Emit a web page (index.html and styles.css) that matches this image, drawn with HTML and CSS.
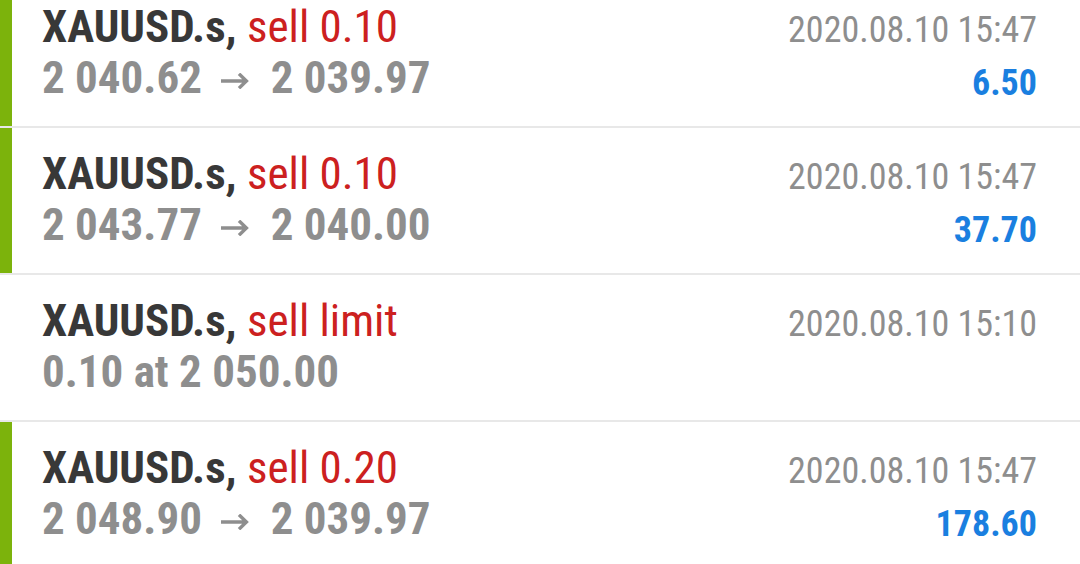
FILE: index.html
```html
<!DOCTYPE html>
<html>
<head>
<meta charset="utf-8">
<link rel="stylesheet" href="styles.css">
</head>
<body>
<div class="list">
  <div class="row open">
    <div class="bar"></div>
    <div class="main">
      <div class="title"><span class="sym">XAUUSD.s,</span> <span class="type">sell 0.10</span></div>
      <div class="prices">2 040.62 <svg class="arrow" viewBox="0 0 28 16" aria-label="→"><path d="M0 8H25.5M18 0.8L25.4 8L18 15.2"/></svg> 2 039.97</div>
    </div>
    <div class="side">
      <div class="time">2020.08.10 15:47</div>
      <div class="profit">6.50</div>
    </div>
  </div>
  <div class="row open">
    <div class="bar"></div>
    <div class="main">
      <div class="title"><span class="sym">XAUUSD.s,</span> <span class="type">sell 0.10</span></div>
      <div class="prices">2 043.77 <svg class="arrow" viewBox="0 0 28 16" aria-label="→"><path d="M0 8H25.5M18 0.8L25.4 8L18 15.2"/></svg> 2 040.00</div>
    </div>
    <div class="side">
      <div class="time">2020.08.10 15:47</div>
      <div class="profit">37.70</div>
    </div>
  </div>
  <div class="row">
    <div class="bar"></div>
    <div class="main">
      <div class="title"><span class="sym">XAUUSD.s,</span> <span class="type">sell limit</span></div>
      <div class="prices">0.10 at 2 050.00</div>
    </div>
    <div class="side">
      <div class="time">2020.08.10 15:10</div>
      <div class="profit"></div>
    </div>
  </div>
  <div class="row open">
    <div class="bar"></div>
    <div class="main">
      <div class="title"><span class="sym">XAUUSD.s,</span> <span class="type">sell 0.20</span></div>
      <div class="prices">2 048.90 <svg class="arrow" viewBox="0 0 28 16" aria-label="→"><path d="M0 8H25.5M18 0.8L25.4 8L18 15.2"/></svg> 2 039.97</div>
    </div>
    <div class="side">
      <div class="time">2020.08.10 15:47</div>
      <div class="profit">178.60</div>
    </div>
  </div>
</div>
</body>
</html>
```
FILE: styles.css
```css
html, body {
  margin: 0;
  padding: 0;
  background: #ffffff;
  overflow: hidden;
}
body {
  width: 1080px;
  height: 564px;
  font-family: "Roboto Condensed", Roboto, sans-serif;
  font-size: 36px;
}
.list {
  display: flex;
  flex-direction: column;
  margin-top: -19px;
}
.row {
  display: flex;
  height: 145px;
  border-bottom: 2px solid #e8e8e8;
}
.bar {
  width: 12px;
  flex: none;
}
.row.open .bar {
  background: #7cb30c;
}
.main {
  flex: 1;
  padding: 20px 0 0 30px;
  font-size: 45px;
  line-height: 51px;
  white-space: nowrap;
}
.sym {
  font-weight: 700;
  color: #383838;
}
.type {
  color: #cc2020;
}
.prices {
  font-weight: 700;
  color: #8e8e8e;
}
.arrow {
  width: 28px;
  height: 16px;
  vertical-align: 4px;
  margin: 0 11px 0 9px;
  fill: none;
  stroke: #8e8e8e;
  stroke-width: 3.4;
  stroke-linecap: butt;
  stroke-linejoin: miter;
}
.side {
  flex: none;
  padding: 24px 43px 0 0;
  text-align: right;
  white-space: nowrap;
}
.time {
  line-height: 51px;
  color: #8e8e8e;
}
.profit {
  line-height: 51px;
  margin-top: 2px;
  font-weight: 700;
  color: #1a7fe0;
}
```
